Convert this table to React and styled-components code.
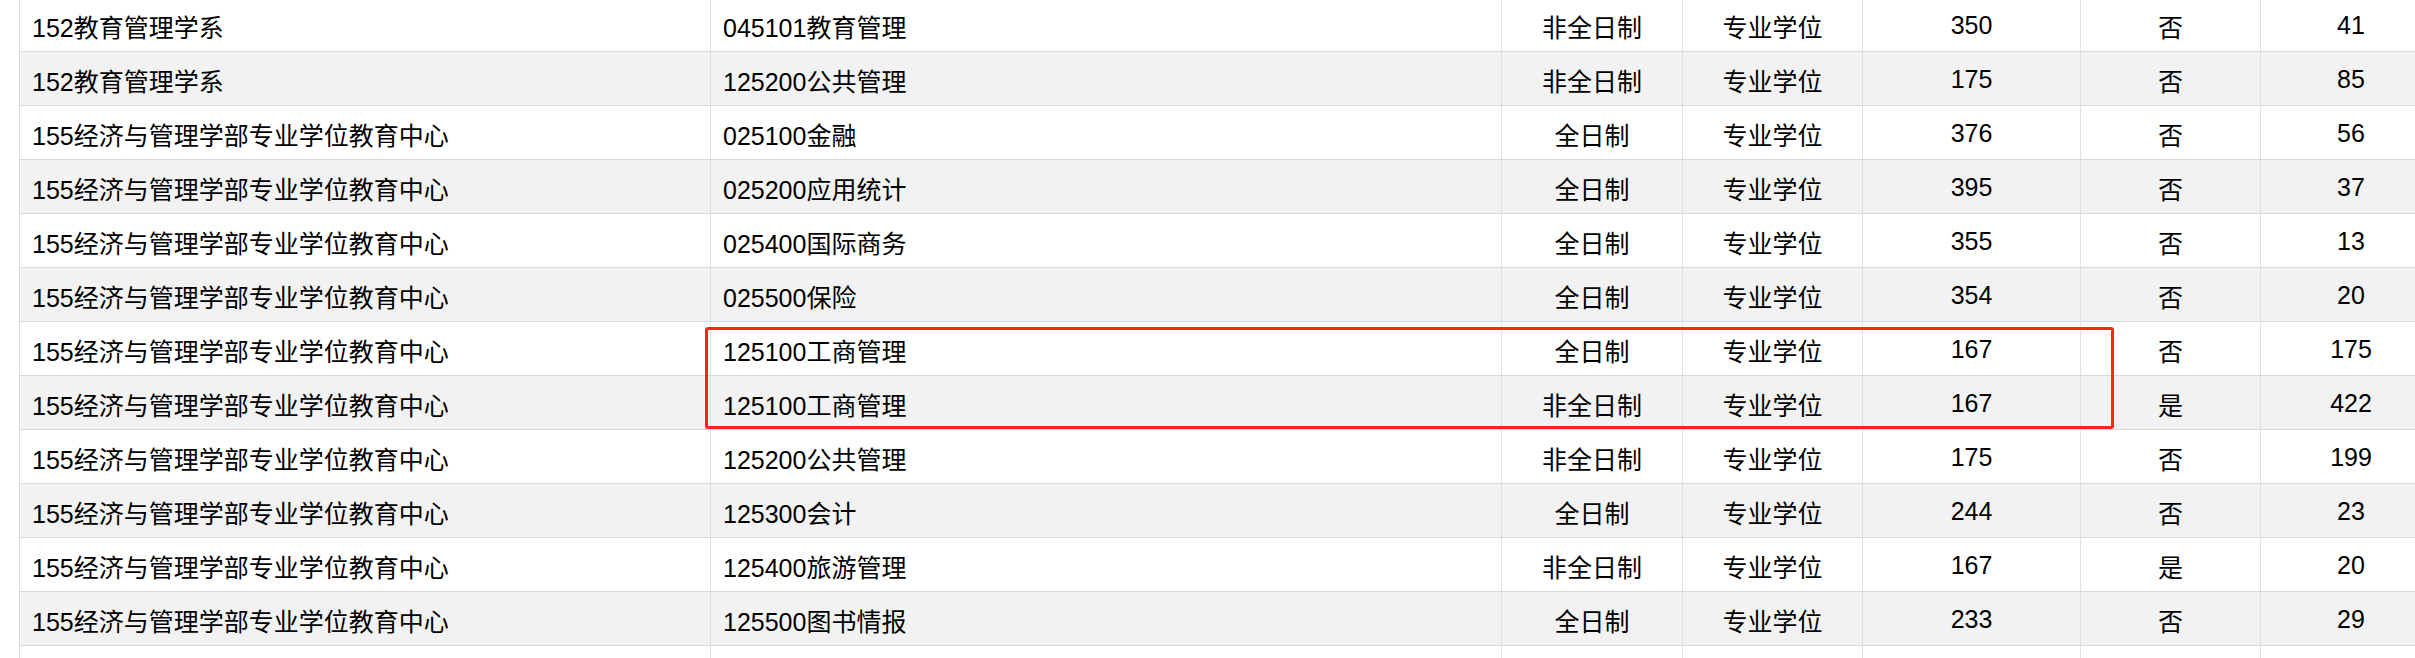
import styled, { createGlobalStyle } from "styled-components";

const GlobalStyle = createGlobalStyle`
  body {
    margin: 0;
    background: #fff;
    overflow: hidden;
    font-family: "Liberation Sans", "Noto Sans CJK SC", sans-serif;
  }
`;

const COLS = "691px 791px 181px 180px 218px 180px 181px";

const Page = styled.div`
  padding-left: 19px;
  margin-top: -2px;
`;

const Table = styled.div`
  position: relative;
  width: max-content;
  border-left: 1px solid #dcdcdc;
`;

const Row = styled.div`
  display: grid;
  grid-template-columns: ${COLS};
  height: 54px;
  box-sizing: border-box;
  border-bottom: 1px solid #d9d9d9;
  background: ${(p) => (p.$striped ? "#f2f2f2" : "#fff")};
`;

const Cell = styled.div`
  display: flex;
  align-items: center;
  justify-content: ${(p) => (p.$center ? "center" : "flex-start")};
  padding-left: ${(p) => (p.$center ? "0" : "12px")};
  padding-top: 2px;
  box-sizing: border-box;
  border-right: 1px solid #e0e0e0;
  font-size: 25px;
  color: #000;
  white-space: nowrap;
  overflow: hidden;
`;

// red annotation box drawn over the two 工商管理 rows
const Highlight = styled.div`
  position: absolute;
  left: 685px;
  top: 329px;
  width: 1409px;
  height: 102px;
  box-sizing: border-box;
  border: 3px solid #ff2418;
  border-radius: 3px;
  pointer-events: none;
`;

const DEPT_155 = "155经济与管理学部专业学位教育中心";

const rows = [
  ["152教育管理学系", "045101教育管理", "非全日制", "专业学位", "350", "否", "41"],
  ["152教育管理学系", "125200公共管理", "非全日制", "专业学位", "175", "否", "85"],
  [DEPT_155, "025100金融", "全日制", "专业学位", "376", "否", "56"],
  [DEPT_155, "025200应用统计", "全日制", "专业学位", "395", "否", "37"],
  [DEPT_155, "025400国际商务", "全日制", "专业学位", "355", "否", "13"],
  [DEPT_155, "025500保险", "全日制", "专业学位", "354", "否", "20"],
  [DEPT_155, "125100工商管理", "全日制", "专业学位", "167", "否", "175"],
  [DEPT_155, "125100工商管理", "非全日制", "专业学位", "167", "是", "422"],
  [DEPT_155, "125200公共管理", "非全日制", "专业学位", "175", "否", "199"],
  [DEPT_155, "125300会计", "全日制", "专业学位", "244", "否", "23"],
  [DEPT_155, "125400旅游管理", "非全日制", "专业学位", "167", "是", "20"],
  [DEPT_155, "125500图书情报", "全日制", "专业学位", "233", "否", "29"],
  // next row only shows its top edge in the frame
  ["", "", "", "", "", "", ""],
];

const App = () => {
  return (
    <>
      <GlobalStyle />
      <Page>
        <Table>
          {rows.map((row, i) => (
            <Row key={i} $striped={i % 2 === 1}>
              {row.map((val, j) => (
                <Cell key={j} $center={j > 1}>
                  {val}
                </Cell>
              ))}
            </Row>
          ))}
          <Highlight />
        </Table>
      </Page>
    </>
  );
};

export default App;
